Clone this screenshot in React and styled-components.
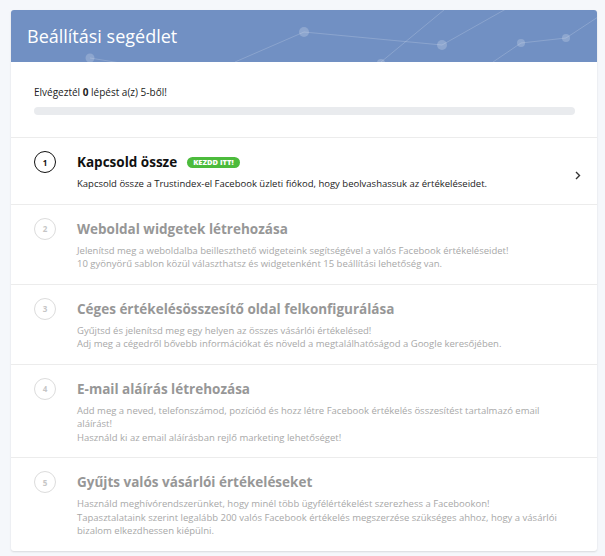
import React from 'react';
import styled, { createGlobalStyle } from 'styled-components';

const GlobalStyle = createGlobalStyle`
  html, body {
    margin: 0;
    padding: 0;
    background: #f5f7fb;
    font-family: 'Open Sans', 'Noto Sans', sans-serif;
  }
`;

const Page = styled.div`
  padding: 10px 8px 8px 11px;
`;

const Card = styled.div`
  width: 586px;
  background: #fff;
  border-radius: 3px;
  box-shadow: 0 1px 2px rgba(0, 0, 0, 0.12);
  overflow: hidden;
`;

const Header = styled.div`
  position: relative;
  height: 52px;
  background: #7190c3;
  display: flex;
  align-items: center;
  padding: 0 16px;
  overflow: hidden;
`;

const Pattern = styled.svg`
  position: absolute;
  left: 0;
  top: 0;
  pointer-events: none;
`;

const Title = styled.h1`
  position: relative;
  margin: 0;
  color: #fff;
  font-size: 18px;
  font-weight: 400;
`;

const Progress = styled.div`
  padding: 23px 22px 22px 23px;
  border-bottom: 1px solid #ececec;
`;

const ProgressText = styled.div`
  font-size: 10px;
  color: #222;
  margin-bottom: 8px;

  b {
    font-weight: 700;
  }
`;

const Bar = styled.div`
  height: 8px;
  border-radius: 4px;
  background: #e9ebee;
`;

const Step = styled.div`
  display: flex;
  align-items: flex-start;
  padding: 14px 16px 13px 23px;
  border-bottom: ${(p) => (p.last ? 'none' : '1px solid #ececec')};
`;

const Circle = styled.div`
  flex: none;
  box-sizing: border-box;
  width: 22px;
  height: 22px;
  border-radius: 50%;
  border: ${(p) => (p.active ? '1.6px solid #111' : '1.4px solid #dcdcdc')};
  color: ${(p) => (p.active ? '#111' : '#c6c6c6')};
  font-size: 8px;
  font-weight: 700;
  display: flex;
  align-items: center;
  justify-content: center;
  margin-top: -1px;
  margin-right: 21px;
`;

const Body = styled.div`
  flex: 1;
  padding-right: 6px;
`;

const StepTitle = styled.div`
  display: flex;
  align-items: center;
  font-size: 13.5px;
  font-weight: 700;
  line-height: 20px;
  color: ${(p) => (p.active ? '#111' : '#979797')};
`;

const Badge = styled.span`
  margin-left: 10px;
  background: #4cbb3c;
  color: #fff;
  font-size: 7.5px;
  font-weight: 800;
  line-height: 11px;
  padding: 0 6px;
  border-radius: 6px;
`;

const Desc = styled.div`
  margin-top: 5px;
  font-size: 9.5px;
  line-height: 13.5px;
  color: ${(p) => (p.active ? '#222' : '#a8a8a8')};
`;

const Chevron = styled.svg`
  flex: none;
  align-self: center;
  margin-top: 8px;
`;

const steps = [
  {
    title: 'Kapcsold össze',
    badge: 'KEZDD ITT!',
    lines: ['Kapcsold össze a Trustindex-el Facebook üzleti fiókod, hogy beolvashassuk az értékeléseidet.'],
  },
  {
    title: 'Weboldal widgetek létrehozása',
    lines: [
      'Jelenítsd meg a weboldalba beilleszthető widgeteink segítségével a valós Facebook értékeléseidet!',
      '10 gyönyörű sablon közül választhatsz és widgetenként 15 beállítási lehetőség van.',
    ],
  },
  {
    title: 'Céges értékelésösszesítő oldal felkonfigurálása',
    lines: [
      'Gyűjtsd és jelenítsd meg egy helyen az összes vásárlói értékelésed!',
      'Adj meg a cégedről bővebb információkat és növeld a megtalálhatóságod a Google keresőjében.',
    ],
  },
  {
    title: 'E-mail aláírás létrehozása',
    lines: [
      'Add meg a neved, telefonszámod, pozíciód és hozz létre Facebook értékelés összesítést tartalmazó email aláírást!',
      'Használd ki az email aláírásban rejlő marketing lehetőséget!',
    ],
  },
  {
    title: 'Gyűjts valós vásárlói értékeléseket',
    lines: [
      'Használd meghívórendszerünket, hogy minél több ügyfélértékelést szerezhess a Facebookon!',
      'Tapasztalataink szerint legalább 200 valós Facebook értékelés megszerzése szükséges ahhoz, hogy a vásárlói bizalom elkezdhessen kiépülni.',
    ],
  },
];

const HeaderPattern = () => (
  <Pattern width="586" height="52" viewBox="0 0 586 52">
    <g stroke="rgba(255,255,255,0.18)" strokeWidth="1" fill="none">
      <line x1="79" y1="48" x2="140" y2="58" />
      <line x1="224" y1="52" x2="293" y2="22" />
      <line x1="293" y1="22" x2="431" y2="35" />
      <line x1="431" y1="35" x2="502" y2="-5" />
      <line x1="370" y1="52" x2="439" y2="-5" />
      <line x1="482" y1="52" x2="510" y2="33" />
      <line x1="510" y1="33" x2="555" y2="28" />
      <line x1="555" y1="28" x2="590" y2="5" />
    </g>
    <g fill="rgba(255,255,255,0.2)">
      <circle cx="79" cy="48" r="4.5" />
      <circle cx="293" cy="22" r="5" />
      <circle cx="431" cy="35" r="5" />
      <circle cx="370" cy="53" r="4" />
      <circle cx="510" cy="33" r="4" />
      <circle cx="555" cy="28" r="4" />
    </g>
  </Pattern>
);

const App = () => (
  <>
    <GlobalStyle />
    <Page>
      <Card>
        <Header>
          <HeaderPattern />
          <Title>Beállítási segédlet</Title>
        </Header>
        <Progress>
          <ProgressText>
            Elvégeztél <b>0</b> lépést a(z) 5-ből!
          </ProgressText>
          <Bar />
        </Progress>
        {steps.map((s, i) => {
          const active = i === 0;
          return (
            <Step key={s.title} last={i === steps.length - 1}>
              <Circle active={active}>{i + 1}</Circle>
              <Body>
                <StepTitle active={active}>
                  {s.title}
                  {s.badge && <Badge>{s.badge}</Badge>}
                </StepTitle>
                <Desc active={active}>
                  {s.lines.map((l) => (
                    <div key={l}>{l}</div>
                  ))}
                </Desc>
              </Body>
              {active && (
                <Chevron width="6" height="9" viewBox="0 0 6 9">
                  <path d="M1 1l3.5 3.5L1 8" stroke="#333" strokeWidth="1.4" fill="none" />
                </Chevron>
              )}
            </Step>
          );
        })}
      </Card>
    </Page>
  </>
);

export default App;
